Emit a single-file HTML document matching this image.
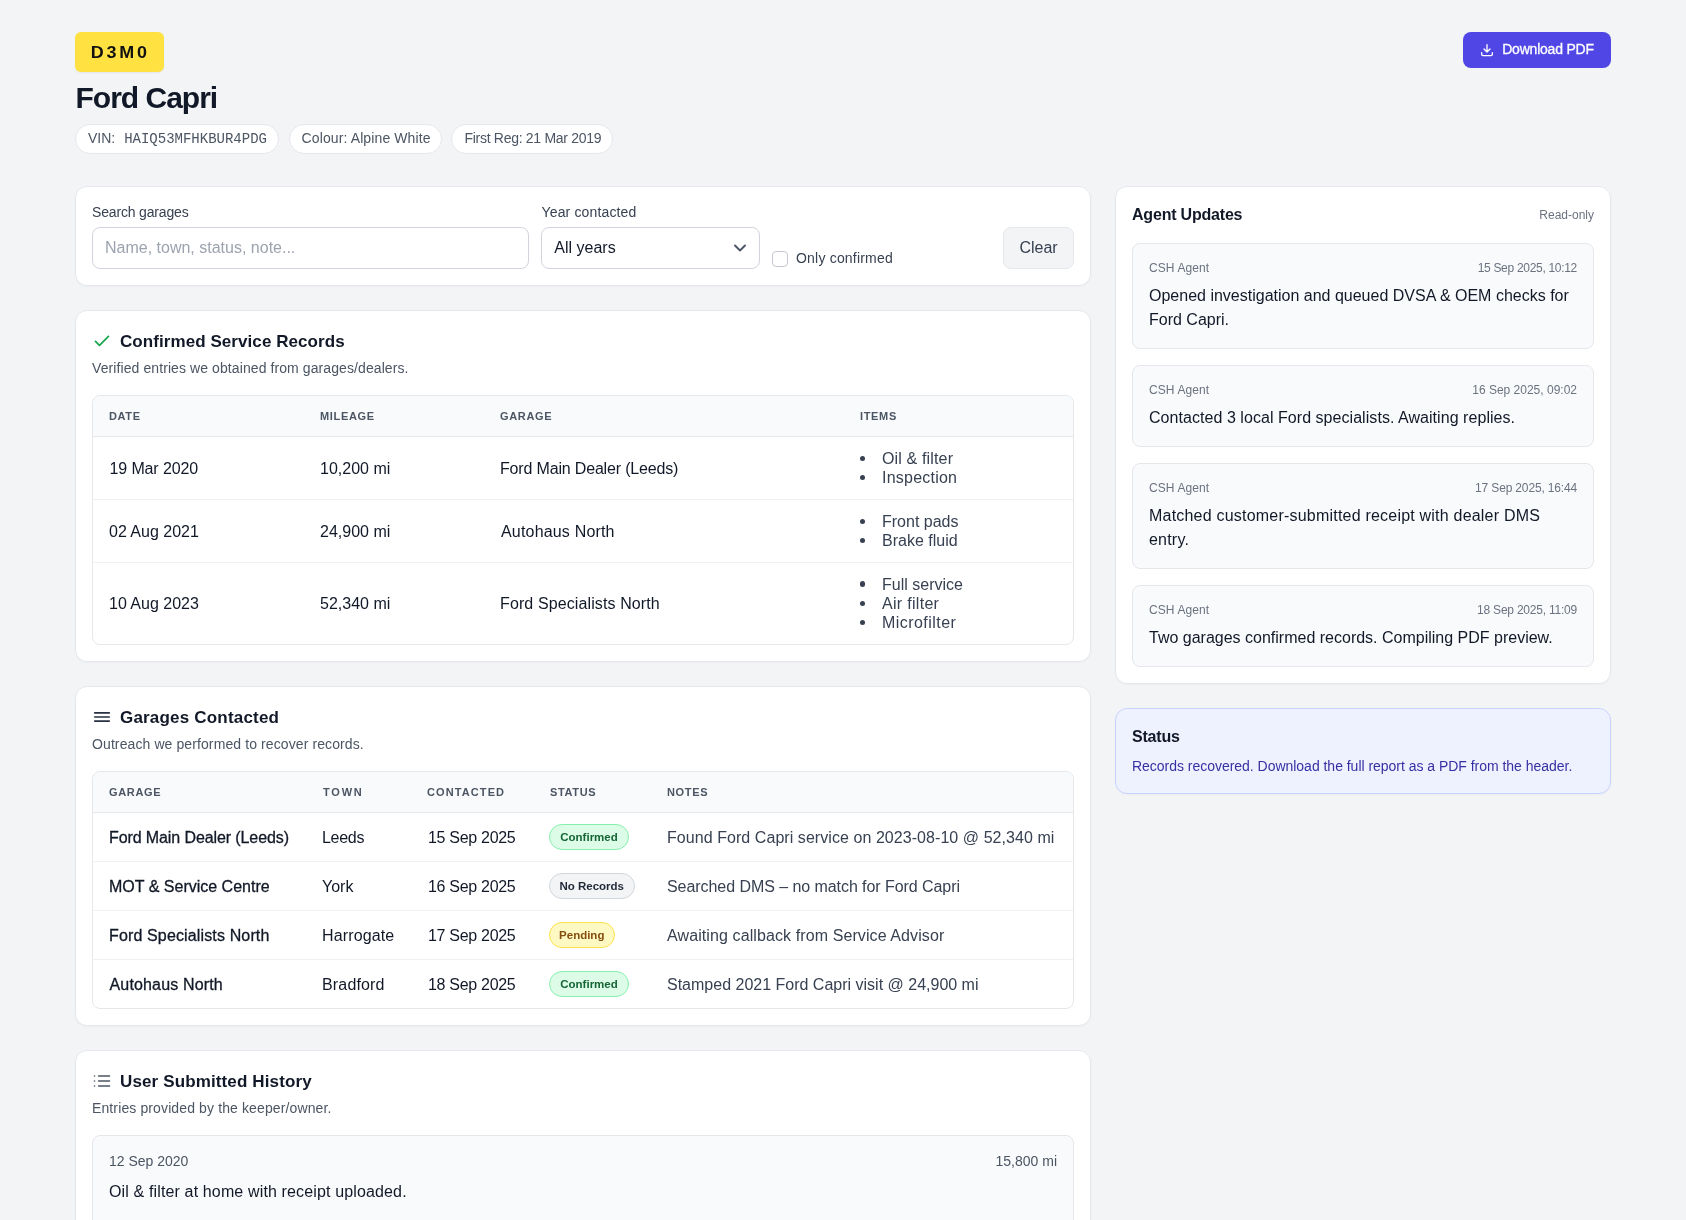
<!DOCTYPE html>
<html lang="en">
<head>
<meta charset="utf-8">
<title>Ford Capri – Service History</title>
<style>
*{box-sizing:border-box;margin:0;padding:0}
html,body{width:1686px;height:1220px;overflow:hidden}
body{background:#f3f4f6;font-family:"Liberation Sans",sans-serif;color:#111827;-webkit-font-smoothing:antialiased}
.wrap{width:1536px;margin:0 auto;padding-top:32px;position:relative;will-change:transform}
.logo{display:inline-block;width:89px;height:40px;background:#ffe142;border-radius:6px;font-weight:700;font-size:16px;letter-spacing:2.450px;text-align:center;line-height:42px;color:#111;box-shadow:0 1px 2px rgba(0,0,0,.06);padding-left:.500px}
.dl{position:absolute;right:0;top:32px;height:36px;width:148px;background:#4f46e5;color:#fff;border-radius:8px;font-size:14px;letter-spacing:-.3px;display:flex;align-items:center;justify-content:center;gap:8px;padding-right:1px}
.dl span{position:relative;top:-1px;left:-.5px;letter-spacing:-.22px;-webkit-text-stroke:.3px #fff}
h1{font-size:30px;font-weight:700;line-height:36px;margin-top:8px;color:#111827;letter-spacing:-1px;margin-left:.5px}
.chips{display:flex;gap:9.400px;margin-top:8px}
.chip{height:30px;border:1px solid #e5e7eb;background:#fff;border-radius:15px;padding:0 12px;font-size:14px;line-height:27px;color:#4b5563;white-space:nowrap}
.mono{font-family:"Liberation Mono",monospace;font-size:14px;margin-left:5px}
.grid{display:flex;gap:24px;margin-top:32px;align-items:flex-start}
.left{width:1016px}
.right{width:496px}
.card{background:#fff;border:1px solid #e5e7eb;border-radius:12px;padding:16px;margin-bottom:24px;box-shadow:0 1px 2px rgba(0,0,0,.03)}

.filter{height:100px;position:relative}
.lbl{position:absolute;top:15px;font-size:14px;line-height:20px;color:#374151}
.inp{position:absolute;top:40px;height:42px;border:1px solid #d1d5db;border-radius:8px;background:#fff;font-size:16px;line-height:40px;padding:0 12px}
.ph{color:#9ca3af}
.cb{position:absolute;left:696px;top:64px;width:16px;height:16px;border:1px solid #c4c9d1;border-radius:4px;background:#fff}
.cbl{position:absolute;left:720px;top:61px;font-size:14px;line-height:20px;color:#374151;letter-spacing:.2px}
.clear{position:absolute;right:16px;top:40px;width:71px;height:42px;border:1px solid #e5e7eb;background:#f3f4f6;border-radius:8px;font-size:16px;line-height:40px;text-align:center;color:#374151}
.ttl{display:flex;align-items:center;height:28px;font-size:17px;font-weight:700;color:#111827;letter-spacing:.02px}
.ttl svg{margin-right:8px;flex:none}
.ttl span{position:relative;top:1px}
.sub{font-size:14px;line-height:20px;color:#4b5563;margin-top:4px;position:relative;top:-1px}
.tbl{margin-top:16px;border:1px solid #e5e7eb;border-radius:8px;overflow:hidden;width:982px}
table{border-collapse:separate;border-spacing:0;width:980px;table-layout:fixed}
th{height:40px;background:#f9fafb;text-align:left;padding:0 16px;font-size:11px;font-weight:700;letter-spacing:.65px;color:#4b5563;text-transform:uppercase;border-bottom:1px solid #e5e7eb}
td{padding:12px 16px;font-size:16px;line-height:19px;color:#111827;vertical-align:middle;white-space:nowrap}
td ul{padding-left:22px;color:#374151;list-style:none;line-height:19.2px}
td li{position:relative}
td li::before{content:"";position:absolute;left:-22.300px;top:6.800px;width:5.600px;height:5.600px;border-radius:50%;background:#374151}

th{height:41px}
tr+tr+tr td{border-top:1px solid #f0f1f3}
.c td{height:62px;padding:0 16px}
.c tr+tr+tr td{height:63px}
.c tr:last-child td{height:82px}
.g td{padding:0 16px;height:48px;line-height:20px}
.g tr+tr+tr td{height:49px}
.g td.n{color:#374151}
.g td:first-child{-webkit-text-stroke:.3px #111827}
.g td{padding-top:2px}
.g td.bt{padding-top:0}
.g td.d{letter-spacing:-.3px;padding-left:17px}
.bdg{display:inline-block;height:26px;border-radius:13px;padding:0;text-align:center;font-size:11.500px;font-weight:700;line-height:24px;border:1px solid;vertical-align:middle;margin-left:-1px}
.ok{background:#dcfce7;border-color:#86efac;color:#166534}
.no{background:#f3f4f6;border-color:#d1d5db;color:#1f2937}
.pe{background:#fef9c3;border-color:#fde047;color:#854d0e}
.ubox{margin-top:16px;border:1px solid #e5e7eb;border-radius:8px;background:#f9fafb;padding:16px;height:120px}
.urow{display:flex;justify-content:space-between;font-size:14px;line-height:20px;color:#4b5563;position:relative;top:-1px}
.ubody{margin-top:8px;font-size:16px;line-height:24px;color:#111827}
.ahead{display:flex;justify-content:space-between;align-items:center;height:24px}
.ahead b{font-size:16px;font-weight:700;color:#111827;letter-spacing:-.2px}
.ahead span{font-size:12px;color:#6b7280}
.upd{margin-top:16px;border:1px solid #e5e7eb;border-radius:8px;background:#f9fafb;padding:16px}
.upd .h{display:flex;justify-content:space-between;font-size:12px;line-height:16px;color:#6b7280}
.upd .h span:first-child{letter-spacing:.1px}
.upd .b{margin-top:8px;font-size:16px;line-height:24px;color:#111827}
.status{background:#eef2ff;border-color:#c7d2fe}
.status b{display:block;font-size:16px;line-height:24px;color:#111827;letter-spacing:-.2px}
.status p{margin-top:7px;padding-bottom:1px;font-size:14px;line-height:20px;color:#3730a3;letter-spacing:-.025px}
</style>
</head>
<body>
<div class="wrap">
  <div class="logo"><span style="display:inline-block;transform:scaleX(1.12)">D3M0</span></div>
  <div class="dl">
    <svg width="16" height="16" viewBox="0 0 24 24" fill="none" stroke="#fff" stroke-width="2" stroke-linecap="round" stroke-linejoin="round"><path d="M12 4v11M7.5 10.5 12 15l4.500-4.500M4 16v2.500a2 2 0 0 0 2 2h12a2 2 0 0 0 2-2V16"/></svg>
    <span>Download PDF</span>
  </div>
  <h1>Ford Capri</h1>
  <div class="chips">
    <div class="chip" style="width:204.200px">VIN: <span class="mono">HAIQ53MFHKBUR4PDG</span></div>
    <div class="chip" style="width:153.500px;letter-spacing:.11px">Colour: Alpine White</div>
    <div class="chip" style="width:161.800px;letter-spacing:-.29px">First Reg: 21 Mar 2019</div>
  </div>
  <div class="grid">
    <div class="left">
      <div class="card filter">
        <div class="lbl" style="left:16px;letter-spacing:-.17px">Search garages</div>
        <div class="inp ph" style="left:16px;width:437px">Name, town, status, note...</div>
        <div class="lbl" style="left:465.500px;letter-spacing:.15px">Year contacted</div>
        <div class="inp" style="left:465.300px;width:219.200px">All years
          <svg style="position:absolute;right:12px;top:14px" width="14" height="12" viewBox="0 0 14 12" fill="none" stroke="#4b5563" stroke-width="1.900" stroke-linecap="round" stroke-linejoin="round"><path d="M2 3.500 7 8.500l5-5"/></svg>
        </div>
        <div class="cb"></div><div class="cbl">Only confirmed</div>
        <div class="clear">Clear</div>
      </div>
      <div class="card">
        <div class="ttl"><svg width="20" height="20" viewBox="0 0 20 20" fill="none" stroke="#16a34a" stroke-width="1.670" stroke-linecap="butt" stroke-linejoin="round"><path d="M16.900 4.950 7.500 14.350 3.050 9.900"/></svg><span style="letter-spacing:.07px">Confirmed Service Records</span></div>
        <div class="sub" style="letter-spacing:.09px">Verified entries we obtained from garages/dealers.</div>
        <div class="tbl"><table class="c">
          <colgroup><col style="width:211px"><col style="width:180px"><col style="width:360px"><col></colgroup>
          <tr><th>Date</th><th>Mileage</th><th>Garage</th><th>Items</th></tr>
          <tr><td><span style="letter-spacing:-.12px;margin-left:.5px">19 Mar 2020</span></td><td>10,200 mi</td><td><span style="letter-spacing:-.17px">Ford Main Dealer (Leeds)</span></td><td><ul><li style="letter-spacing:.15px">Oil &amp; filter</li><li style="letter-spacing:.23px">Inspection</li></ul></td></tr>
          <tr><td>02 Aug 2021</td><td>24,900 mi</td><td><span style="letter-spacing:.18px;margin-left:1px">Autohaus North</span></td><td><ul><li>Front pads</li><li>Brake fluid</li></ul></td></tr>
          <tr><td>10 Aug 2023</td><td>52,340 mi</td><td><span style="letter-spacing:.11px">Ford Specialists North</span></td><td><ul><li>Full service</li><li style="letter-spacing:.3px">Air filter</li><li style="letter-spacing:.45px">Microfilter</li></ul></td></tr>
        </table></div>
      </div>
      <div class="card">
        <div class="ttl"><svg width="20" height="20" viewBox="0 0 20 20" fill="none" stroke="#273142" stroke-width="1.650" stroke-linecap="round"><path d="M2.700 5.900h14.600M2.700 10h14.600M2.700 14.100h14.600"/></svg><span style="letter-spacing:.19px">Garages Contacted</span></div>
        <div class="sub" style="letter-spacing:.1px">Outreach we performed to recover records.</div>
        <div class="tbl"><table class="g">
          <colgroup><col style="width:213px"><col style="width:105px"><col style="width:123px"><col style="width:117px"><col></colgroup>
          <tr><th>Garage</th><th style="letter-spacing:1.800px;padding-left:17px">Town</th><th style="letter-spacing:1.100px">Contacted</th><th>Status</th><th>Notes</th></tr>
          <tr><td><span style="letter-spacing:-.1px">Ford Main Dealer (Leeds)</span></td><td><span style="letter-spacing:-.3px">Leeds</span></td><td class="d">15 Sep 2025</td><td class="bt"><span class="bdg ok" style="width:80px">Confirmed</span></td><td class="n"><span style="letter-spacing:.06px">Found Ford Capri service on 2023-08-10 @ 52,340 mi</span></td></tr>
          <tr><td>MOT &amp; Service Centre</td><td>York</td><td class="d">16 Sep 2025</td><td class="bt"><span class="bdg no" style="width:85.500px">No Records</span></td><td class="n"><span style="letter-spacing:-.06px">Searched DMS – no match for Ford Capri</span></td></tr>
          <tr><td><span style="letter-spacing:.14px">Ford Specialists North</span></td><td><span style="letter-spacing:.14px">Harrogate</span></td><td class="d">17 Sep 2025</td><td class="bt"><span class="bdg pe" style="width:65.500px">Pending</span></td><td class="n"><span style="letter-spacing:.1px">Awaiting callback from Service Advisor</span></td></tr>
          <tr><td><span style="letter-spacing:.16px;margin-left:.500px">Autohaus North</span></td><td><span style="letter-spacing:.16px">Bradford</span></td><td class="d">18 Sep 2025</td><td class="bt"><span class="bdg ok" style="width:80px">Confirmed</span></td><td class="n">Stamped 2021 Ford Capri visit @ 24,900 mi</td></tr>
        </table></div>
      </div>
      <div class="card">
        <div class="ttl"><svg width="20" height="20" viewBox="0 0 20 20" fill="none" stroke="#4b5563" stroke-width="1.670" stroke-linecap="round"><path d="M6.670 5h10.830M6.670 10h10.830M6.670 15h10.830M2.500 5h.010M2.500 10h.010M2.500 15h.010"/></svg><span style="letter-spacing:.13px">User Submitted History</span></div>
        <div class="sub" style="letter-spacing:.12px">Entries provided by the keeper/owner.</div>
        <div class="ubox">
          <div class="urow"><span>12 Sep 2020</span><span>15,800 mi</span></div>
          <div class="ubody" style="letter-spacing:.14px">Oil &amp; filter at home with receipt uploaded.</div>
        </div>
      </div>
    </div>
    <div class="right">
      <div class="card">
        <div class="ahead"><b>Agent Updates</b><span>Read-only</span></div>
        <div class="upd"><div class="h"><span>CSH Agent</span><span style="letter-spacing:-.3px">15 Sep 2025, 10:12</span></div><div class="b">Opened investigation and queued DVSA &amp; OEM checks for<br>Ford Capri.</div></div>
        <div class="upd"><div class="h"><span>CSH Agent</span><span>16 Sep 2025, 09:02</span></div><div class="b" style="letter-spacing:.05px">Contacted 3 local Ford specialists. Awaiting replies.</div></div>
        <div class="upd"><div class="h"><span>CSH Agent</span><span style="letter-spacing:-.16px">17 Sep 2025, 16:44</span></div><div class="b" style="letter-spacing:.21px">Matched customer-submitted receipt with dealer DMS<br>entry.</div></div>
        <div class="upd"><div class="h"><span>CSH Agent</span><span style="letter-spacing:-.22px">18 Sep 2025, 11:09</span></div><div class="b">Two garages confirmed records. Compiling PDF preview.</div></div>
      </div>
      <div class="card status">
        <b>Status</b>
        <p>Records recovered. Download the full report as a PDF from the header.</p>
      </div>
    </div>
  </div>
</div>
</body>
</html>
